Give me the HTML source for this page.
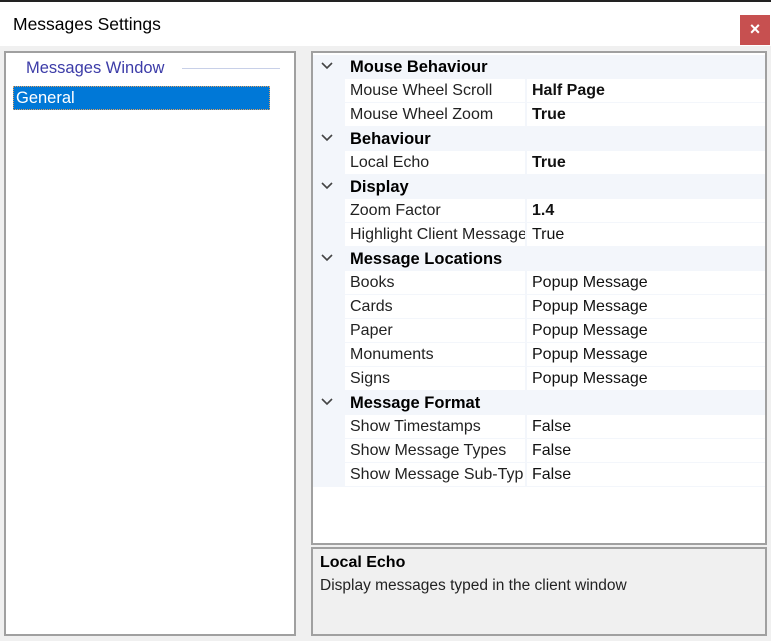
<!DOCTYPE html>
<html><head><style>
*{margin:0;padding:0;box-sizing:border-box}
body{width:771px;height:641px;background:#f0f0f0;font-family:"Liberation Sans",sans-serif;position:relative;overflow:hidden;color:#000}
.top{position:absolute;left:0;top:0;width:771px;height:46px;background:#fff;border-top:2px solid #222}
.title{position:absolute;left:13px;top:12px;font-size:17.5px}
.close{position:absolute;left:740px;top:13px;width:30px;height:30px;background:#c75050;color:#fff;font-size:18px;font-weight:bold;text-align:center;line-height:28px}
.left{position:absolute;left:4px;top:51px;width:292px;height:585px;background:#fff;border:2px solid #a0a0a0}
.grp{position:absolute;left:20px;top:6px;font-size:16.5px;color:#3c3ca8}
.grpline{position:absolute;left:176px;top:15px;width:98px;height:1px;background:#c8d0e8}
.sel{position:absolute;left:7px;top:33px;width:257px;height:24px;background:#0078d7;border:1px dotted #e0a060;color:#fff;font-size:16.5px;padding:2px 0 0 2px}
.grid{position:absolute;left:311px;top:51px;width:456px;height:494px;background:#fff;border:2px solid #a0a0a0}
.r{position:absolute;left:0;width:452px;height:24px;font-size:16px}
.cat{background:#f3f6fb;font-weight:bold}
.cat .n{position:absolute;left:37px;top:3px;font-size:16.5px}
.cat .chev{position:absolute;left:7px;top:3px;width:14px;height:14px}
.item{background:#f3f6fb}
.item .n{position:absolute;left:32px;top:0;width:180px;height:23px;background:#fff;padding:3px 0 0 5px;white-space:nowrap;overflow:hidden;color:#222}
.item .v{position:absolute;left:214px;top:0;width:238px;height:23px;background:#fff;padding:3px 0 0 5px;color:#111}
.b{font-weight:bold}
.help{position:absolute;left:311px;top:547px;width:456px;height:89px;background:#f0f0f0;border:2px solid #a0a0a0}
.help .h{position:absolute;left:7px;top:5px;font-weight:bold;font-size:16px}
.help .d{position:absolute;left:7px;top:28px;font-size:15.5px;color:#222}
</style></head><body>
<div class="top"><div class="title">Messages Settings</div><div class="close">×</div></div>
<div class="left"><div class="grp">Messages Window</div><div class="grpline"></div><div class="sel">General</div></div>
<div class="grid">
<div class="r cat" style="top:2px"><svg class="chev" viewBox="0 0 14 14"><path d="M2 5 L7 10 L12 5" fill="none" stroke="#444" stroke-width="1.6"/></svg><span class="n">Mouse Behaviour</span></div>
<div class="r item" style="top:26px"><div class="n">Mouse Wheel Scroll</div><div class="v b">Half Page</div></div>
<div class="r item" style="top:50px"><div class="n">Mouse Wheel Zoom</div><div class="v b">True</div></div>
<div class="r cat" style="top:74px"><svg class="chev" viewBox="0 0 14 14"><path d="M2 5 L7 10 L12 5" fill="none" stroke="#444" stroke-width="1.6"/></svg><span class="n">Behaviour</span></div>
<div class="r item" style="top:98px"><div class="n">Local Echo</div><div class="v b">True</div></div>
<div class="r cat" style="top:122px"><svg class="chev" viewBox="0 0 14 14"><path d="M2 5 L7 10 L12 5" fill="none" stroke="#444" stroke-width="1.6"/></svg><span class="n">Display</span></div>
<div class="r item" style="top:146px"><div class="n">Zoom Factor</div><div class="v b">1.4</div></div>
<div class="r item" style="top:170px"><div class="n">Highlight Client Message</div><div class="v">True</div></div>
<div class="r cat" style="top:194px"><svg class="chev" viewBox="0 0 14 14"><path d="M2 5 L7 10 L12 5" fill="none" stroke="#444" stroke-width="1.6"/></svg><span class="n">Message Locations</span></div>
<div class="r item" style="top:218px"><div class="n">Books</div><div class="v">Popup Message</div></div>
<div class="r item" style="top:242px"><div class="n">Cards</div><div class="v">Popup Message</div></div>
<div class="r item" style="top:266px"><div class="n">Paper</div><div class="v">Popup Message</div></div>
<div class="r item" style="top:290px"><div class="n">Monuments</div><div class="v">Popup Message</div></div>
<div class="r item" style="top:314px"><div class="n">Signs</div><div class="v">Popup Message</div></div>
<div class="r cat" style="top:338px"><svg class="chev" viewBox="0 0 14 14"><path d="M2 5 L7 10 L12 5" fill="none" stroke="#444" stroke-width="1.6"/></svg><span class="n">Message Format</span></div>
<div class="r item" style="top:362px"><div class="n">Show Timestamps</div><div class="v">False</div></div>
<div class="r item" style="top:386px"><div class="n">Show Message Types</div><div class="v">False</div></div>
<div class="r item" style="top:410px"><div class="n">Show Message Sub-Typ</div><div class="v">False</div></div>
</div>
<div class="help"><div class="h">Local Echo</div><div class="d">Display messages typed in the client window</div></div>
</body></html>
